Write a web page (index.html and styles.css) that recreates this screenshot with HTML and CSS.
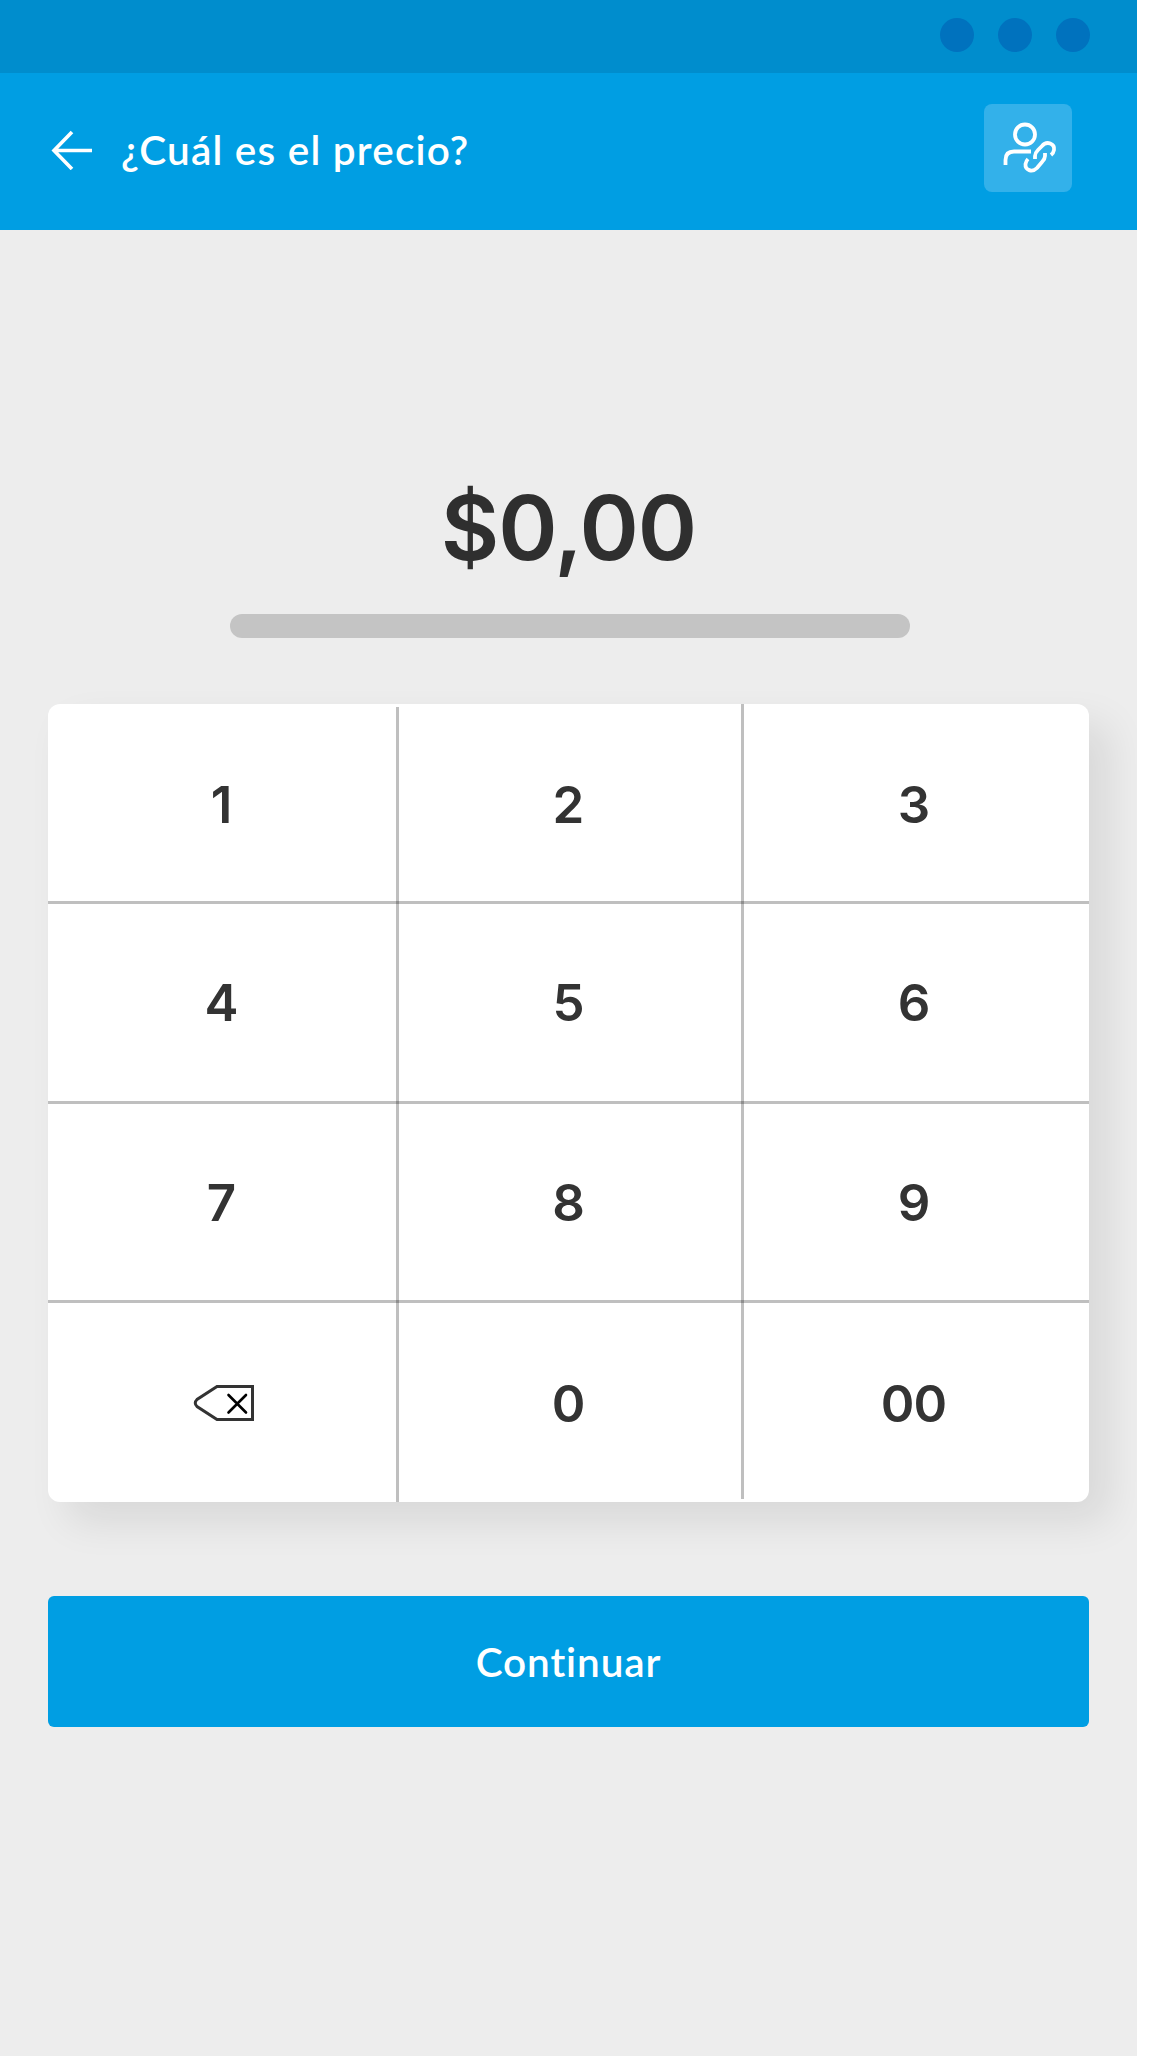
FILE: index.html
```
<!DOCTYPE html>
<html lang="es">
<head>
    <meta charset="UTF-8">
    <meta name="viewport" content="width=device-width, initial-scale=1.0">
    <title>¿Cuál es el precio?</title>
    <link rel="stylesheet" href="styles.css">
</head>
<body>
    <div class="pantalla">
        <div class="barra-estado">
            <span class="punto"></span>
            <span class="punto"></span>
            <span class="punto"></span>
        </div>

        <header class="encabezado">
            <svg class="flecha" viewBox="0 0 42 40" fill="none" stroke="#fff" stroke-width="3.6">
                <path d="M21 2 L3 20.5 L21 39 M3 20.5 H41"/>
            </svg>
            <h1 class="titulo">¿Cuál es el precio?</h1>
            <button class="boton-cliente" aria-label="Cliente">
                <svg viewBox="0 0 88 88" fill="none" stroke="#fff" stroke-width="3.8">
                    <circle cx="41" cy="30.5" r="10"/>
                    <path d="M21.500 61 V56 Q21.500 47.500 30 47.500 H47"/>
                    <path d="M51 55 V52 Q51 49 54 46 L58 42 C63 36 71 40 70 46 Q69.500 49 67 51"/>
                    <path d="M61 49 V52 Q61 55 58 58 L53 64 C48 69 41 66 41.500 60 Q42 57 44 55"/>
                </svg>
            </button>
        </header>

        <main class="contenido">
            <div class="monto">$0,00</div>
            <div class="barra-monto"></div>

            <div class="teclado">
                <button class="tecla">1</button>
                <button class="tecla">2</button>
                <button class="tecla">3</button>
                <button class="tecla">4</button>
                <button class="tecla">5</button>
                <button class="tecla">6</button>
                <button class="tecla">7</button>
                <button class="tecla">8</button>
                <button class="tecla">9</button>
                <button class="tecla tecla-borrar" aria-label="Borrar">
                    <svg class="borrar" viewBox="0 0 62 38" fill="none">
                        <path d="M24 2.500 H59.500 V35.500 H24 L4 22.500 Q0.500 19 4 15.500 Z" stroke="#333" stroke-width="3"/>
                        <path d="M35.500 11 L53 28.500 M53 11 L35.500 28.500" stroke="#000" stroke-width="2.600" stroke-linecap="round"/>
                    </svg>
                </button>
                <button class="tecla">0</button>
                <button class="tecla">00</button>

                <!-- Líneas divisorias -->
                <span class="linea-h fila-1"></span>
                <span class="linea-h fila-2"></span>
                <span class="linea-h fila-3"></span>
                <span class="linea-v columna-1"></span>
                <span class="linea-v columna-2"></span>
            </div>

            <button class="continuar">Continuar</button>
        </main>
    </div>
</body>
</html>
```
FILE: styles.css
```
* {
    box-sizing: border-box;
}

body {
    margin: 0;
    background-color: #fff;
    font-family: Lato, sans-serif;
}

button {
    margin: 0;
    padding: 0;
    border: none;
    background: none;
    font-family: inherit;
}

.pantalla {
    width: 1137px;
    height: 2056px;
    background-color: #ededed;
    overflow: hidden;
}

.barra-estado {
    display: flex;
    justify-content: flex-end;
    gap: 24px;
    height: 73px;
    padding: 18px 47px 0 0;
    background-color: #008dcd;
}

.punto {
    width: 34px;
    height: 34px;
    border-radius: 50%;
    background-color: #0072be;
}

.encabezado {
    display: flex;
    align-items: center;
    height: 157px;
    padding: 0 65px 4px 51px;
    background-color: #009ee3;
}

.flecha {
    width: 42px;
    height: 40px;
}

.titulo {
    flex: 1;
    margin: 0;
    padding-left: 28px;
    color: #fff;
    font-size: 40.5px;
    font-weight: 600;
    letter-spacing: 1.2px;
    line-height: 48px;
}

.boton-cliente {
    width: 88px;
    height: 88px;
    margin-bottom: 3px;
    border-radius: 8px;
    background-color: #33b1ea;
}

.boton-cliente svg {
    display: block;
}

.contenido {
    display: flex;
    flex-direction: column;
    padding: 242px 48px 0;
}

.monto {
    height: 110px;
    color: #2f2f2f;
    font-family: Inter, sans-serif;
    font-size: 90px;
    font-weight: 600;
    letter-spacing: -1px;
    line-height: 112px;
    text-align: center;
}

.barra-monto {
    width: 680px;
    height: 24px;
    margin: 32px 0 66px 182px;
    border-radius: 12px;
    background-color: #c4c4c4;
}

.teclado {
    position: relative;
    display: grid;
    grid-template-columns: 349px 345px 346px;
    grid-template-rows: 198px 197px 203px 200px;
    height: 798px;
    border-radius: 12px;
    background-color: #fff;
    box-shadow: 20px 20px 40px rgba(0, 0, 0, 0.09);
}

.tecla {
    display: flex;
    align-items: center;
    justify-content: center;
    padding: 3px 3px 0 0;
    color: #333;
    font-family: Inter, sans-serif;
    font-size: 51px;
    font-weight: 600;
    letter-spacing: -1px;
}

.tecla-borrar {
    padding: 2px 0 0 2px;
}

.borrar {
    width: 62px;
    height: 38px;
}

.linea-h,
.linea-v {
    position: absolute;
    background-color: rgba(0, 0, 0, 0.25);
}

.linea-h {
    left: 0;
    width: 100%;
    height: 3px;
}

.linea-v {
    width: 3px;
    height: 795px;
}

.fila-1 { top: 197px; }
.fila-2 { top: 397px; }
.fila-3 { top: 596px; }

.columna-1 {
    left: 348px;
    bottom: 0;
}

.columna-2 {
    left: 693px;
    top: 0;
}

.continuar {
    height: 131px;
    margin-top: 94px;
    border-radius: 6px;
    background-color: #009ee3;
    color: #fff;
    font-size: 40.5px;
    font-weight: 600;
    letter-spacing: 0.9px;
}
```
